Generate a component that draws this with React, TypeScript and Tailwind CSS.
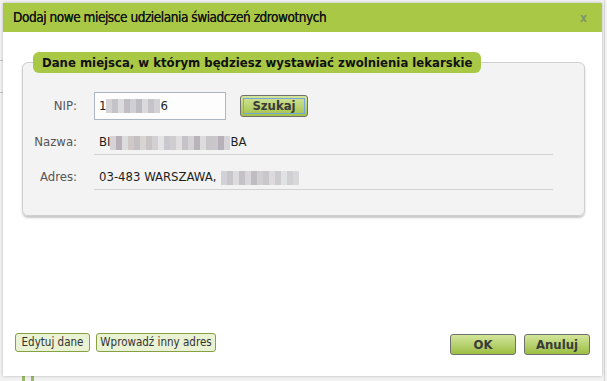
const font = "font-['DejaVu_Sans_Condensed','DejaVu_Sans',sans-serif]";

function Blur({ cells }: { cells: string[] }) {
  return (
    <span className="inline-flex h-[14px] items-stretch align-middle">
      {cells.map((c, i) => (
        <span key={i} className={`w-[6px] ${c}`} />
      ))}
    </span>
  );
}

function Row({ label, children }: { label: string; children: React.ReactNode }) {
  return (
    <div className="flex h-[35px] items-end">
      <div className="w-[44px] pb-[5px] text-right text-[13px] leading-[16px] text-[#555]">{label}</div>
      <div className="ml-[17px] flex h-full w-[459px] items-end border-b border-[#d2d2d2] pb-[4px] pl-[5px] text-[13px] leading-[16px] text-[#1e1e1e]">
        {children}
      </div>
    </div>
  );
}

export default function App() {
  return (
    <div className={`relative h-[381px] w-[607px] overflow-hidden bg-[#f2f2f2] ${font}`}>
      {/* page behind the dialog */}
      <div className="absolute left-[22px] top-[375px] h-[6px] w-[12px] border-x-[3px] border-[#9bb86a]" />
      <div className="absolute left-0 top-[60px] h-px w-[3px] bg-[#c8c8c8]" />
      <div className="absolute left-0 top-[92px] h-px w-[3px] bg-[#c8c8c8]" />
      <div className="absolute right-[2px] top-0 h-full w-px bg-[#d6d6d6]" />

      <div className="absolute left-[3px] top-[3px] flex h-[373px] w-[599px] flex-col bg-white shadow-[0_0_3px_rgba(0,0,0,0.25)]">
        <div className="flex h-[29px] shrink-0 items-center justify-between bg-[#a9c846] pl-[10px] pr-[15px]">
          <span className="text-[13.5px] tracking-[-0.45px] text-[#141414] [text-shadow:0_0_0.5px_#141414]">
            Dodaj nowe miejsce udzielania świadczeń zdrowotnych
          </span>
          <span className="text-[12px] font-bold leading-none text-[#7b9868]">x</span>
        </div>

        <div className="flex flex-1 flex-col px-[19px]">
          <fieldset className="mt-[20px] w-[563px] rounded-[6px] border border-[#cfcfcf] bg-[#f3f3f3] px-[10px] pb-[25px] shadow-[0_2px_2px_rgba(0,0,0,0.22)]">
            <legend className="h-[21px] rounded-[6px] bg-[#a9c846] px-[9px] text-[13px] font-bold leading-[21px] text-[#111]">
              Dane miejsca, w którym będziesz wystawiać zwolnienia lekarskie
            </legend>

            <div className="mt-[19px] flex h-[28px] items-center">
              <div className="w-[44px] text-right text-[13px] text-[#555]">NIP:</div>
              <div className="ml-[17px] flex h-[28px] w-[132px] items-center border border-[#aab6c6] bg-[#fdfdfd] px-[4px] text-[13px] text-[#1e1e1e]">
                1
                <Blur cells={['bg-[#d4d4d8]', 'bg-[#c4c4c8]', 'bg-[#dcdcdf]', 'bg-[#c0bec4]', 'bg-[#d0d0d4]', 'bg-[#bcbcc2]', 'bg-[#dadadd]', 'bg-[#c6c4ca]', 'bg-[#d2d2d6]']} />
                6
              </div>
              <button
                type="button"
                className="ml-[14px] flex h-[22px] w-[68px] items-center justify-center rounded-[3px] border border-[#6f6f6f] bg-gradient-to-b from-[#d3e59a] to-[#a2c246] p-[2px]"
              >
                <span className="flex h-full w-full items-center justify-center border border-[#7aa7d8] text-[13px] font-bold text-[#3b3b3b]">
                  Szukaj
                </span>
              </button>
            </div>

            <Row label="Nazwa:">
              BI
              <Blur cells={['bg-[#d6d2d6]', 'bg-[#b8b0b8]', 'bg-[#dcdcdc]', 'bg-[#cfc8c8]', 'bg-[#c4c0c2]', 'bg-[#d8d4d2]', 'bg-[#c8c4c6]', 'bg-[#d2d0d0]', 'bg-[#e4e4e4]', 'bg-[#c8c8ce]', 'bg-[#d0ccd0]', 'bg-[#e0dede]', 'bg-[#c6c2c8]', 'bg-[#d4d2d4]', 'bg-[#b8b4ba]', 'bg-[#dcdcdc]', 'bg-[#c8c6c8]', 'bg-[#cac6cc]', 'bg-[#b6b0b8]', 'bg-[#d6d4d8]']} />
              BA
            </Row>
            <Row label="Adres:">
              <span className="mr-[5px]">03-483 WARSZAWA,</span>
              <Blur cells={['bg-[#d2d2d6]', 'bg-[#c8c6ca]', 'bg-[#dcdcde]', 'bg-[#c4c2c6]', 'bg-[#d8d6d8]', 'bg-[#bebcc0]', 'bg-[#d0ced0]', 'bg-[#c8c8cc]', 'bg-[#dcdadc]', 'bg-[#cccccf]', 'bg-[#e2e2e4]', 'bg-[#d0d0d2]', 'bg-[#d8d8da]']} />
            </Row>
          </fieldset>

          <div className="mt-auto flex items-end justify-between pb-[21px]">
            <div className="-ml-[7px] mb-[3px] flex gap-[6px]">
              <button type="button" className="h-[19px] w-[75px] rounded-[3px] border border-[#88a044] bg-[#e9f2d3] text-[11.5px] leading-[17px] text-[#333]">
                Edytuj dane
              </button>
              <button type="button" className="h-[19px] w-[120px] rounded-[3px] border border-[#88a044] bg-[#e9f2d3] text-[11.5px] leading-[17px] text-[#333]">
                Wprowadź inny adres
              </button>
            </div>
            <div className="-mr-[7px] flex gap-[8px]">
              <button type="button" className="h-[21px] w-[66px] rounded-[3px] border border-[#6e6e6e] bg-gradient-to-b from-[#d3e59a] to-[#9dbf40] text-[13px] font-bold text-[#3b3b3b]">
                OK
              </button>
              <button type="button" className="h-[21px] w-[66px] rounded-[3px] border border-[#6e6e6e] bg-gradient-to-b from-[#d3e59a] to-[#9dbf40] text-[13px] font-bold text-[#3b3b3b]">
                Anuluj
              </button>
            </div>
          </div>
        </div>
      </div>
    </div>
  );
}
